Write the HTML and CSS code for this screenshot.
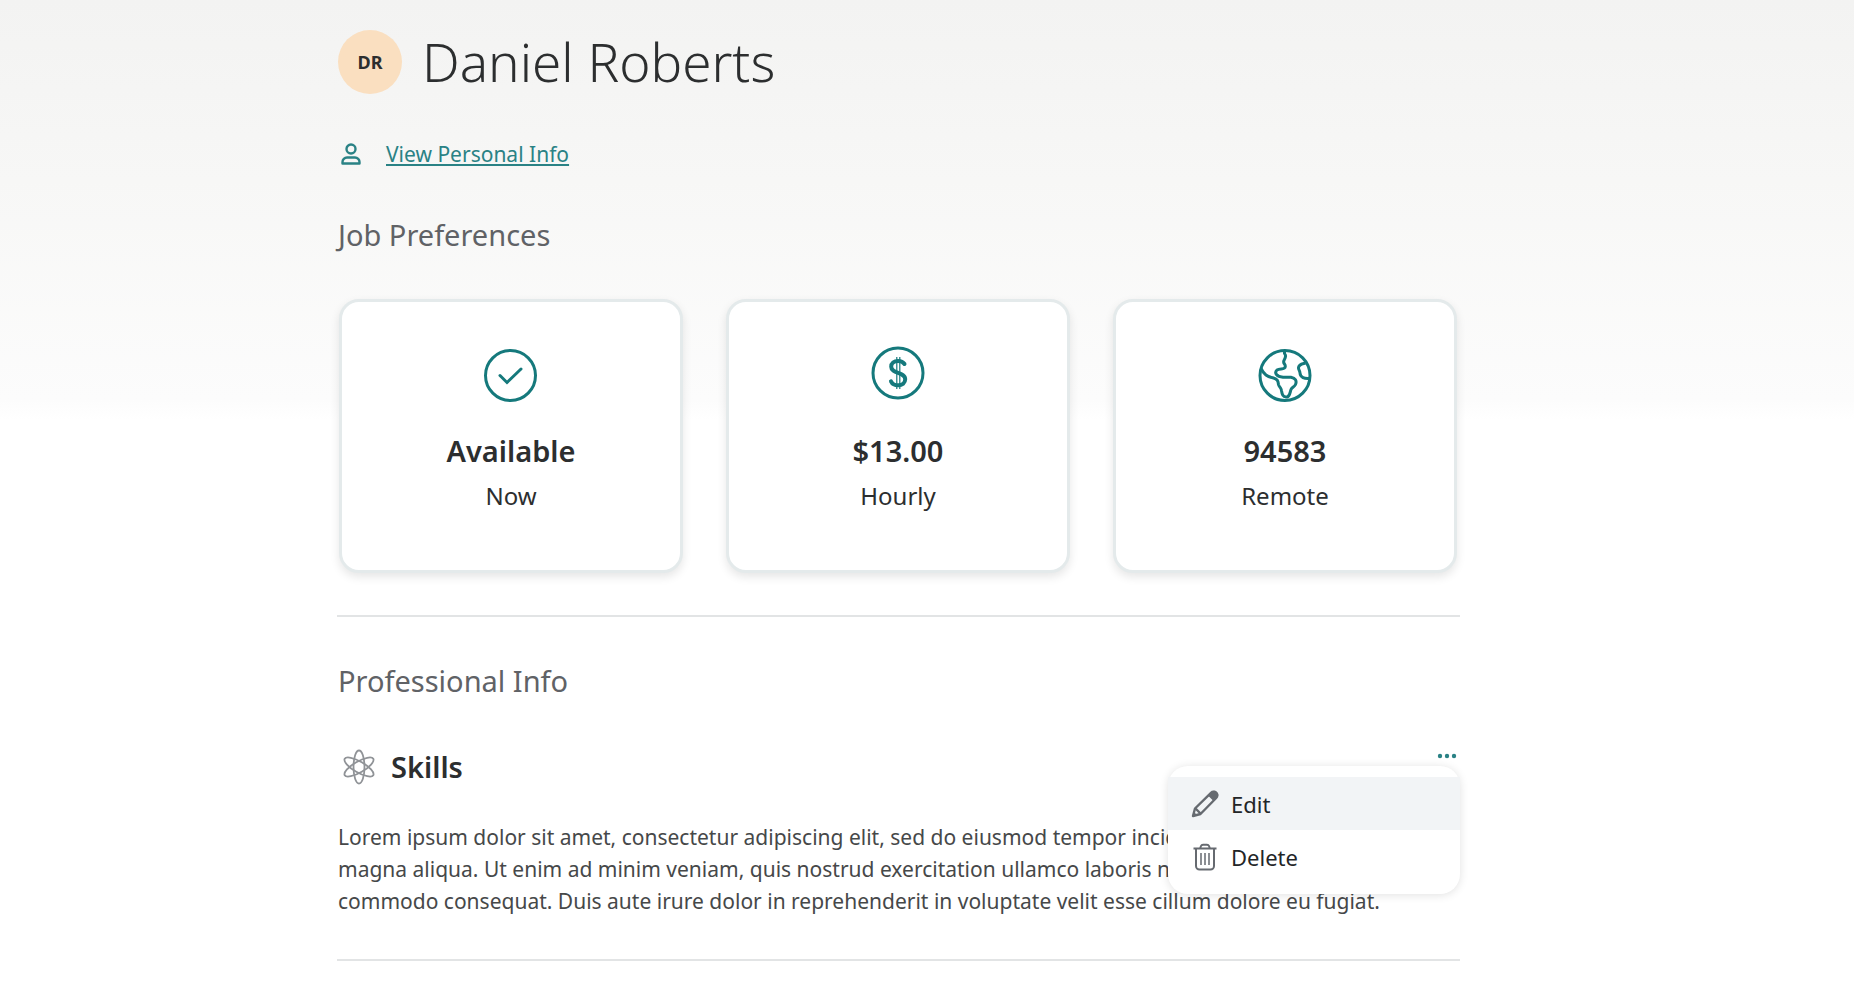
FILE: index.html
```html
<!DOCTYPE html>
<html lang="en">
<head>
    <meta charset="UTF-8">
    <meta name="viewport" content="width=device-width, initial-scale=1.0">
    <title>Daniel Roberts</title>
    <link rel="stylesheet" href="styles.css">
</head>
<body>

    <main class="profile">
        <header class="profile-header">
            <div class="avatar">DR</div>
            <h1>Daniel Roberts</h1>
        </header>

        <div class="personal-info">
            <svg class="person-icon" viewBox="0 0 24 24" fill="none" stroke="currentColor" stroke-width="2.4">
                <circle cx="12" cy="7" r="4.5"/>
                <path d="M3.5 21.5v-1.5a4.5 4.500 0 0 1 4.500-4.500h8a4.500 4.500 0 0 1 4.500 4.500v1.500z" stroke-linejoin="round"/>
            </svg>
            <a href="#personal-info">View Personal Info</a>
        </div>

        <!-- Job Preferences -->
        <section class="preferences">
            <h2>Job Preferences</h2>
            <div class="cards">
                <div class="card">
                    <svg class="card-icon" viewBox="0 0 60 60" fill="none" stroke="currentColor" stroke-width="3">
                        <circle cx="29.5" cy="30.5" r="25"/>
                        <path d="M19 30.5l7 7L40 24" stroke-linecap="round"/>
                    </svg>
                    <h3>Available</h3>
                    <p>Now</p>
                </div>
                <div class="card">
                    <svg class="card-icon" viewBox="0 0 60 60" fill="none" stroke="currentColor" stroke-width="3">
                        <circle cx="30" cy="28" r="25"/>
                        <path d="M36.5 19c-1.500-2.200-3.500-3-6.500-3-4 0-6.800 2.200-6.800 5.700 0 7.500 14 4.700 14 12.600 0 3.500-3 6-7 6-3.500 0-5.800-1-7.200-4" stroke-width="4" stroke-linecap="round"/>
                        <path d="M28.800 12v32M31.800 12v32" stroke-width="1.200"/>
                    </svg>
                    <h3>$13.00</h3>
                    <p>Hourly</p>
                </div>
                <div class="card">
                    <svg class="card-icon" viewBox="0 0 60 60" fill="none" stroke="currentColor" stroke-width="3" stroke-linejoin="round">
                        <circle cx="30" cy="30.5" r="25"/>
                        <path d="M29.500 5.500v3c2 2 1.300 4-.5 7-1.500 3 1.500 3 1.300 6-.3 4-5.300 1.500-8.300 3.500-3 3-.5 6.500 6 7.200h8c4.500.8 6 3.800 4.500 7.300-1 2.500-3.500 2.500-4.500 5s-1 7-4 7.500c-4.500.8-5-3.500-5.500-6.500-.4-3-2.500-3.500-3-6-.4-3.500-1-5.500-5-6.500C12 31.500 9 29.500 6 23.500"/>
                        <path d="M50.500 18c-3.500 1-6.500 1-7 4.500-.3 2 1.300 3 1.500 5.500.3 4.500 4.500 6 9.500 5.500"/>
                    </svg>
                    <h3>94583</h3>
                    <p>Remote</p>
                </div>
            </div>
        </section>

        <!-- Professional Info -->
        <section class="professional">
            <h2>Professional Info</h2>
            <div class="skills-header">
                <svg class="skills-icon" viewBox="0 0 36 36" fill="none" stroke="currentColor" stroke-width="1.8">
                    <ellipse cx="18" cy="18" rx="5.5" ry="16.5"/>
                    <ellipse cx="18" cy="18" rx="5.5" ry="16.5" transform="rotate(60 18 18)"/>
                    <ellipse cx="18" cy="18" rx="5.5" ry="16.5" transform="rotate(120 18 18)"/>
                </svg>
                <h3>Skills</h3>
                <div class="actions">
                    <button class="more-button" type="button" aria-label="More options">
                        <svg class="more-icon" viewBox="0 0 20 6" fill="currentColor">
                            <circle cx="3" cy="3" r="2.200"/>
                            <circle cx="10" cy="3" r="2.200"/>
                            <circle cx="17" cy="3" r="2.200"/>
                        </svg>
                    </button>
                    <div class="menu">
                        <button class="menu-item active" type="button">
                            <svg class="menu-icon" viewBox="0 0 28 28" fill="none" stroke="currentColor" stroke-width="2.4" stroke-linejoin="round">
                                <path d="M2 26l2-7.500L20 2.800a3.300 3.300 0 0 1 5.200 5.200L9.500 24z"/>
                                <path d="M17 5.500l3.500-3.500a3.400 3.400 0 0 1 5.500 5.500l-3.500 3.500z" fill="currentColor" stroke="none"/>
                                <path d="M4.500 18.500l5 5"/>
                                <path d="M1.500 26.500l1-5 4 4z" fill="currentColor" stroke="none"/>
                            </svg>
                            Edit
                        </button>
                        <button class="menu-item" type="button">
                            <svg class="menu-icon" viewBox="0 0 28 28" fill="none" stroke="currentColor" stroke-width="2">
                                <path d="M2.500 5.500h23M9 5.500l1-2.500q.5-1.300 2-1.300h4q1.500 0 2 1.300l1 2.500M5 5.500v17.500a3.500 3.500 0 0 0 3.500 3.500h11a3.500 3.500 0 0 0 3.500-3.500V5.500"/>
                                <path d="M10 10v12M14 10v12M18 10v12" stroke-width="1.500"/>
                            </svg>
                            Delete
                        </button>
                    </div>
                </div>
            </div>
            <p class="skills-text">Lorem ipsum dolor sit amet, consectetur adipiscing elit, sed do eiusmod tempor incididunt ut labore et dolore magna aliqua. Ut enim ad minim veniam, quis nostrud exercitation ullamco laboris nisi ut aliquip ex ea commodo consequat. Duis aute irure dolor in reprehenderit in voluptate velit esse cillum dolore eu fugiat.</p>
        </section>
    </main>

</body>
</html>
```
FILE: styles.css
```css
body {
    margin: 0;
    font-family: 'Noto Sans', 'Open Sans', sans-serif;
    color: #2c2e2f;
    background: #fff linear-gradient(#f3f3f2, #f7f7f6 180px, #fcfcfc 400px, #fff 420px) no-repeat;
    min-height: 100vh;
    padding-right: 57px;
}

h1, h2, h3, p {
    margin: 0;
}

.profile {
    max-width: 1123px;
    margin: 0 auto;
}

.profile-header {
    display: flex;
    align-items: center;
    gap: 20px;
    padding-top: 23px;
}

.avatar {
    display: flex;
    align-items: center;
    justify-content: center;
    width: 64px;
    height: 64px;
    margin-left: 1px;
    border-radius: 50%;
    background-color: #fadfc0;
    font-size: 18px;
    font-weight: 700;
}

h1 {
    font-size: 53px;
    font-weight: 300;
    line-height: 78px;
}

h2 {
    padding-left: 1px;
    font-size: 29px;
    font-weight: 400;
    line-height: 40px;
    color: #606266;
}

h3 {
    font-size: 29px;
    font-weight: 600;
    line-height: 40px;
}

.personal-info {
    display: flex;
    align-items: center;
    gap: 23px;
    padding: 37px 0 45px 2px;
    font-size: 21px;
    line-height: 32px;
    color: #2a8285;
}

.personal-info a {
    color: inherit;
    text-underline-offset: 2px;
}

.person-icon {
    width: 24px;
    height: 24px;
}

.preferences,
.professional {
    border-bottom: 2px solid #e2e4e5;
    padding-bottom: 42px;
}

.professional {
    padding-top: 44px;
}

.cards {
    display: grid;
    grid-template-columns: repeat(3, 1fr);
    gap: 43px;
    padding: 44px 3px 0 2px;
}

.card {
    display: flex;
    flex-direction: column;
    align-items: center;
    padding: 43px 0 56px;
    border: 3px solid #e4eaeb;
    border-radius: 20px;
    background-color: #fff;
    box-shadow: 0 4px 10px rgba(0, 0, 0, 0.1);
}

.card-icon {
    width: 60px;
    height: 60px;
    margin-bottom: 26px;
    color: #15797c;
}

.card p {
    margin-top: 7px;
    font-size: 24px;
    line-height: 36px;
}

.skills-header {
    display: flex;
    align-items: center;
    gap: 14px;
    padding: 46px 0 34px 4px;
}

.skills-icon {
    width: 36px;
    height: 36px;
    color: #909397;
}

.actions {
    position: relative;
    align-self: flex-start;
    margin-left: auto;
}

.more-button {
    display: flex;
    padding: 6px 3px;
    border: none;
    background: none;
    color: #2a8285;
    cursor: pointer;
}

.more-icon {
    width: 20px;
    height: 6px;
}

/* Dropdown opened from the more button */
.menu {
    position: absolute;
    top: 19px;
    right: 0;
    width: 292px;
    padding: 11px 0;
    border-radius: 20px;
    background-color: #fff;
    box-shadow: 0 1px 10px rgba(0, 0, 0, 0.12);
}

.menu-item {
    display: flex;
    align-items: center;
    gap: 12px;
    width: 100%;
    height: 53px;
    padding: 0 23px;
    border: none;
    background: none;
    font-family: inherit;
    font-size: 22px;
    color: #232527;
    cursor: pointer;
}

.menu-item.active {
    background-color: #f2f4f6;
}

.menu-icon {
    width: 28px;
    height: 28px;
    color: #666a70;
}

.skills-text {
    padding: 0 40px 0 1px;
    font-size: 21px;
    line-height: 32px;
    color: #464849;
}
```
